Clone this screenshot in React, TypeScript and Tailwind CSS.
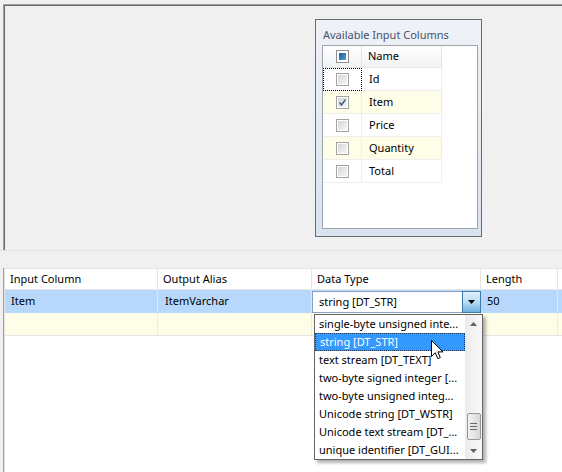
import React from 'react';

const font = { fontFamily: '"Noto Sans", "Open Sans", sans-serif' };

const inputCols = [
  { name: 'Id', checked: false, alt: false, focus: true },
  { name: 'Item', checked: true, alt: true, focus: false },
  { name: 'Price', checked: false, alt: false, focus: false },
  { name: 'Quantity', checked: false, alt: true, focus: false },
  { name: 'Total', checked: false, alt: false, focus: false },
];

const dataTypes = [
  'single-byte unsigned inte...',
  'string [DT_STR]',
  'text stream [DT_TEXT]',
  'two-byte signed integer [...',
  'two-byte unsigned integ...',
  'Unicode string [DT_WSTR]',
  'Unicode text stream [DT_...',
  'unique identifier [DT_GUI...',
];

function CheckBox({ checked }: { checked: boolean }) {
  return (
    <div className="w-[13px] h-[13px] border border-[#a3a3a3] bg-white p-px">
      <div className="w-full h-full bg-gradient-to-br from-[#d6d6d6] to-[#f6f6f6] relative">
        {checked && (
          <svg className="absolute inset-0" width="9" height="9" viewBox="0 0 9 9">
            <path d="M1.5 4.5 L3.5 7 L7.5 1.5" fill="none" stroke="#4d6185" strokeWidth="1.6" />
          </svg>
        )}
      </div>
    </div>
  );
}

function GroupBox() {
  return (
    <div className="w-[167px] h-[218px] border border-[#6b6b6b] bg-gradient-to-b from-[#eef2f7] to-[#d8e3f0] flex flex-col">
      <div className="pl-[7px] pt-[8px] h-[25px] text-[11px] leading-[14px] text-[#45506a]">Available Input Columns</div>
      <div className="ml-[6px] mr-[3px] h-[184px] border border-[#9fa3aa] bg-white text-[11px] text-black">
        <div className="flex h-[22px]">
          <div className="w-[39px] flex items-center justify-center bg-gradient-to-b from-white to-[#f1f2f4] border-r border-b border-[#e3e5e8]">
            <div className="w-[13px] h-[13px] border border-[#8f8f8f] bg-white p-[2px]">
              <div className="w-full h-full bg-gradient-to-br from-[#1c5f99] to-[#4aa0d8]" />
            </div>
          </div>
          <div className="w-[80px] flex items-center pl-[6px] bg-gradient-to-b from-white to-[#f1f2f4] border-r border-b border-[#e3e5e8]">Name</div>
        </div>
        {inputCols.map((c) => (
          <div key={c.name} className={`flex h-[23px] w-[119px] ${c.alt ? 'bg-[#fdfde8]' : 'bg-white'}`}>
            <div className={`w-[39px] flex items-center justify-center ${c.focus ? 'border border-dotted border-black' : 'border-r border-b border-[#eeeeee]'}`}>
              <CheckBox checked={c.checked} />
            </div>
            <div className="w-[80px] flex items-center pl-[7px] border-r border-b border-[#eeeeee]">{c.name}</div>
          </div>
        ))}
      </div>
    </div>
  );
}

function Cursor() {
  return (
    <svg className="absolute left-[431px] top-[340px]" width="13" height="20" viewBox="0 0 13 20">
      <path d="M0.5 0.5 V16.5 L4.3 12.8 L6.8 18.6 L9.3 17.6 L6.9 11.9 H12 Z" fill="white" stroke="black" strokeWidth="1" strokeLinejoin="miter" />
    </svg>
  );
}

function DropList() {
  return (
    <div className="absolute left-[310px] top-[46px] w-[169px] h-[146px] border border-[#646464] bg-white flex shadow-[3px_3px_3px_rgba(0,0,0,0.3)] text-[11px]">
      <div className="w-[150px] flex flex-col">
        {dataTypes.map((t, i) => (
          <div
            key={t}
            className={`h-[18px] flex items-center pl-[4px] whitespace-nowrap ${i === 1 ? 'bg-[#3399ff] text-white border border-dotted border-[#1a3c66]' : 'text-black'}`}
          >
            {t}
          </div>
        ))}
      </div>
      <div className="w-[17px] bg-gradient-to-r from-[#ececec] to-[#f8f8f8] flex flex-col items-center">
        <div className="h-[17px] flex items-center justify-center">
          <svg width="7" height="4" viewBox="0 0 7 4"><path d="M0 4 L3.5 0 L7 4 Z" fill="#606060" /></svg>
        </div>
        <div className="flex-1 w-full flex flex-col items-center">
          <div className="mt-[81px] w-[14px] h-[27px] rounded-[2px] border border-[#979797] bg-gradient-to-r from-[#f2f2f2] to-[#d8d8d8] flex flex-col items-center justify-center gap-[2px]">
            <div className="w-[7px] h-px bg-[#6a6a6a]" />
            <div className="w-[7px] h-px bg-[#6a6a6a]" />
            <div className="w-[7px] h-px bg-[#6a6a6a]" />
          </div>
        </div>
        <div className="h-[17px] flex items-center justify-center">
          <svg width="7" height="4" viewBox="0 0 7 4"><path d="M0 0 L3.5 4 L7 0 Z" fill="#606060" /></svg>
        </div>
      </div>
    </div>
  );
}

export default function App() {
  return (
    <div className="w-[562px] h-[472px] bg-[#f0f0f0] overflow-hidden flex flex-col relative" style={font}>
      {/* top designer panel */}
      <div className="ml-[3px] mt-[4px] h-[246px] border-t border-l border-[#a0a0a0]">
        <div className="h-full border-t border-l border-[#696969] pl-[310px] pt-[13px]">
          <GroupBox />
        </div>
      </div>
      <div className="h-px bg-[#e2e2e2]" />
      <div className="h-[17px]" />

      {/* mapping grid */}
      <div className="ml-[3px] flex-1 border-l border-[#a0a0a0] relative">
        <div className="h-full border-l border-t border-l-[#e3e3e3] border-t-[#e3e3e3] bg-white text-[11px] text-black">
          <div className="flex h-[21px] border-b border-[#e5e5e5]">
            <div className="w-[153px] pl-[5px] flex items-center border-r border-[#e5e5e5]">Input Column</div>
            <div className="w-[154px] pl-[5px] flex items-center border-r border-[#e5e5e5]">Output Alias</div>
            <div className="w-[169px] pl-[5px] flex items-center border-r border-[#e5e5e5]">Data Type</div>
            <div className="w-[77px] pl-[5px] flex items-center border-r border-[#e5e5e5]">Length</div>
            <div className="flex-1" />
          </div>
          <div className="flex h-[23px] bg-[#b7d8fb]">
            <div className="w-[153px] pl-[6px] flex items-center border-r border-[#d6e8fb]">Item</div>
            <div className="w-[154px] pl-[7px] flex items-center border-r border-[#d6e8fb]">ItemVarchar</div>
            <div className="w-[169px] pt-px flex">
              <div className="flex-1 h-[22px] border border-[#8aa2c0] border-r-0 bg-white flex items-center pl-[6px]">string [DT_STR]</div>
              <div className="w-[19px] h-[22px] border border-[#3d7bad] bg-gradient-to-b from-[#e4f1fb] via-[#b9dcf4] to-[#6db3e2] flex items-center justify-center">
                <svg width="7" height="4" viewBox="0 0 7 4"><path d="M0 0 L3.5 4 L7 0 Z" fill="#000" /></svg>
              </div>
            </div>
            <div className="w-[77px] pl-[6px] flex items-center border-r border-[#d6e8fb]">50</div>
            <div className="flex-1" />
          </div>
          <div className="flex h-[23px] bg-[#fefee8] border-b border-[#e5e5e5]">
            <div className="w-[153px] border-r border-[#ececdc]" />
            <div className="w-[154px] border-r border-[#ececdc]" />
            <div className="w-[169px] border-r border-[#ececdc]" />
            <div className="w-[77px] border-r border-[#ececdc]" />
            <div className="flex-1" />
          </div>
        </div>
        <DropList />
      </div>
      <Cursor />
    </div>
  );
}
